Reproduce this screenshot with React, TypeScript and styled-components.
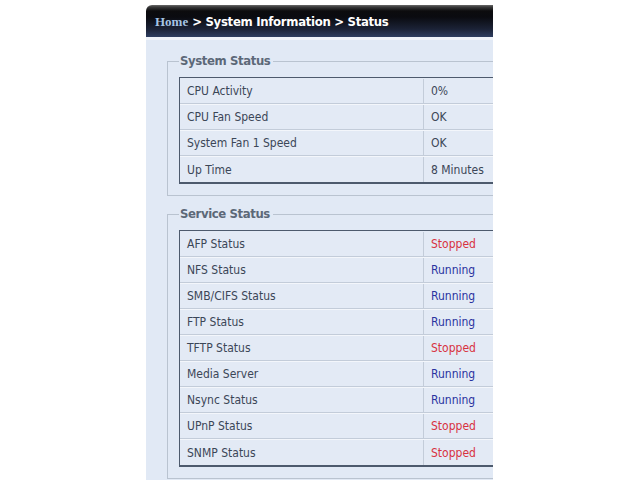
import React from "react";
import styled, { createGlobalStyle } from "styled-components";

const Global = createGlobalStyle`
  html, body { margin: 0; padding: 0; background: #ffffff; }
  body { font-family: "DejaVu Sans Condensed", "DejaVu Sans", Tahoma, sans-serif; }
`;

const Page = styled.div`
  display: flex;
  padding: 5px 0 0 146px;
  height: 480px;
  box-sizing: border-box;
`;

const Frame = styled.div`
  width: 347px;
  display: flex;
  flex-direction: column;
  overflow: hidden;
`;

const Header = styled.div`
  flex-shrink: 0;
  height: 32px;
  box-sizing: border-box;
  display: flex;
  align-items: center;
  padding: 1px 0 0 9px;
  border-top-left-radius: 6px;
  background: linear-gradient(
    to bottom,
    #6a6a6a 0px,
    #3a3a3a 2px,
    #0c0c0e 6px,
    #0a0b10 12px,
    #1b2236 24px,
    #2e3d60 32px
  );
  white-space: nowrap;
`;

const HomeLink = styled.span`
  font-family: "Liberation Serif", "DejaVu Serif", serif;
  font-weight: bold;
  font-size: 13px;
  color: #a6c4e4;
  margin-right: 4px;
`;

const Crumbs = styled.span`
  font-weight: bold;
  font-size: 13px;
  letter-spacing: -0.3px;
  color: #ffffff;
`;

const Strip = styled.div`
  flex-shrink: 0;
  height: 3px;
  background: #eef2f9;
`;

const Panel = styled.div`
  flex: 1 0 auto;
  background: #e1e9f5;
  padding: 13px 0 0 21px;
  display: flex;
  flex-direction: column;
  gap: 10px;
`;

const Group = styled.fieldset`
  flex-shrink: 0;
  margin: 0;
  width: 360px;
  box-sizing: border-box;
  border: 1px solid #b9c3d0;
  border-right: none;
  padding: 8px 0 11px 11px;
`;

const Legend = styled.legend`
  padding: 0 3px 0 1px;
  font-weight: bold;
  font-size: 13px;
  letter-spacing: -0.4px;
  line-height: 16px;
  color: #5c6878;
`;

const Table = styled.div`
  display: flex;
  flex-direction: column;
  border: 1px solid #4d5a6d;
  border-bottom-width: 2px;
  border-right: none;
  width: 360px;
`;

const Row = styled.div`
  display: grid;
  grid-template-columns: 243px 1fr;
  height: 26px;
  box-sizing: border-box;
  border-top: 1px solid #f3f6fb;
  border-bottom: 1px solid #c3ccd9;
  background: #e3eaf5;
  &:first-child { border-top-color: #e3eaf5; }
  &:last-child { border-bottom: none; }
`;

const Cell = styled.div<{ $tone?: "stop" | "run" }>`
  display: flex;
  align-items: center;
  padding-left: 7px;
  font-size: 12px;
  color: ${(p) => (p.$tone === "stop" ? "#d8323f" : p.$tone === "run" ? "#2a33a0" : "#3b4657")};
  & + & {
    border-left: 1px solid #c3ccd9;
    padding-left: 7px;
  }
`;

const system = [
  ["CPU Activity", "0%"],
  ["CPU Fan Speed", "OK"],
  ["System Fan 1 Speed", "OK"],
  ["Up Time", "8 Minutes"],
];

const services: [string, boolean][] = [
  ["AFP Status", false],
  ["NFS Status", true],
  ["SMB/CIFS Status", true],
  ["FTP Status", true],
  ["TFTP Status", false],
  ["Media Server", true],
  ["Nsync Status", true],
  ["UPnP Status", false],
  ["SNMP Status", false],
];

export default function App() {
  return (
    <>
      <Global />
      <Page>
        <Frame>
          <Header>
            <HomeLink>Home</HomeLink>
            <Crumbs>&gt; System Information &gt; Status</Crumbs>
          </Header>
          <Strip />
          <Panel>
            <Group>
              <Legend>System Status</Legend>
              <Table>
                {system.map(([k, v]) => (
                  <Row key={k}>
                    <Cell>{k}</Cell>
                    <Cell>{v}</Cell>
                  </Row>
                ))}
              </Table>
            </Group>
            <Group>
              <Legend>Service Status</Legend>
              <Table>
                {services.map(([k, on]) => (
                  <Row key={k}>
                    <Cell>{k}</Cell>
                    <Cell $tone={on ? "run" : "stop"}>{on ? "Running" : "Stopped"}</Cell>
                  </Row>
                ))}
              </Table>
            </Group>
          </Panel>
        </Frame>
      </Page>
    </>
  );
}
